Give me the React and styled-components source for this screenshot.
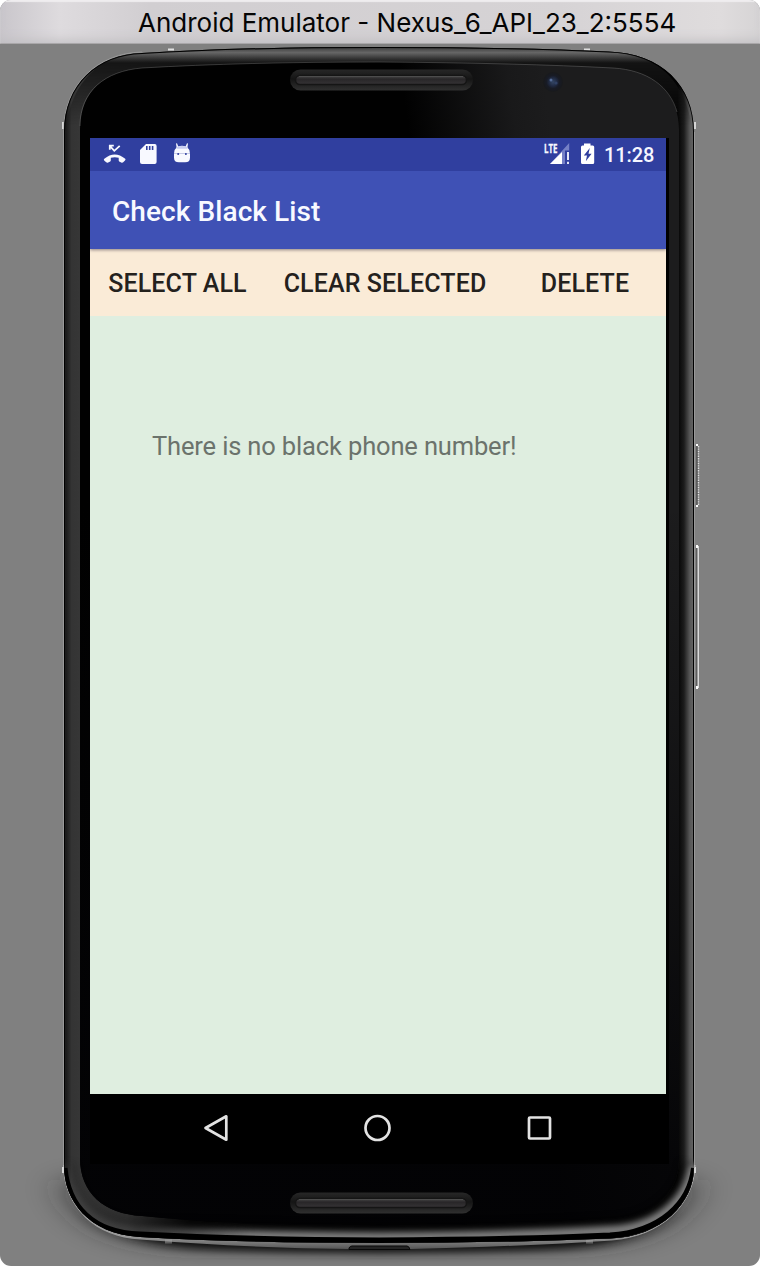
import React from "react";
import styled, { createGlobalStyle } from "styled-components";

const GlobalStyle = createGlobalStyle`
  html, body { margin: 0; background: #fff; }
  * { box-sizing: border-box; }
`;

const Window = styled.main`
  position: relative;
  display: flex;
  flex-direction: column;
  width: 760px;
  height: 1266px;
  overflow: hidden;
  border-radius: 11px;
  background: #808080;
  font-family: Roboto, "Liberation Sans", sans-serif;
`;

const TitleBar = styled.header`
  flex: none;
  height: 44px;
  padding-left: 138px;
  background: linear-gradient(90deg, #c9c6cb 0, #dedbde 60px, #d1ced1 150px, #d6d3d5 560px, #dfdcdd 720px, #d6d4d5 100%);
  box-shadow: inset 0 2px 1px #efedef, inset 0 -1px 0 #a9a7a9, inset 0 -9px 12px -6px #bfbdc1;
`;

const WindowTitle = styled.h1`
  margin: 0;
  font: 400 26px/45px Inter, "Liberation Sans", sans-serif;
  white-space: nowrap;
  color: #050505;
`;

const DeviceArt = styled.svg`
  position: absolute;
  inset: 0;
  pointer-events: none;
`;

const Screen = styled.section`
  position: relative;
  display: flex;
  flex-direction: column;
  width: 576px;
  height: 1026px;
  margin: 94px 0 0 90px;
  background: #000;
  box-shadow: 3px 0 0 #000;
`;

const StatusBar = styled.div`
  display: flex;
  align-items: center;
  justify-content: space-between;
  height: 33px;
  background: #303f9f;
`;

const StatusGroup = styled.div`
  display: flex;
  height: 33px;
`;

const Clock = styled.time`
  width: 62px;
  font-size: 20px;
  font-weight: 500;
  line-height: 34px;
  letter-spacing: -0.1px;
  color: #f5f6ff;
`;

const AppBar = styled.div`
  position: relative;
  z-index: 1;
  height: 78px;
  padding-left: 22px;
  background: #3f51b5;
  box-shadow: 0 1px 3px rgba(50, 40, 60, 0.55);
  clip-path: inset(0 0 -8px 0);
`;

const AppTitle = styled.h2`
  margin: 0;
  font-size: 28px;
  font-weight: 500;
  line-height: 81px;
  letter-spacing: 0.08px;
  color: #f8f9ff;
`;

const ActionBar = styled.div`
  display: flex;
  height: 67px;
  background: #faebd7;
`;

const Action = styled.button`
  flex: 0 0 ${(p) => p.$width}px;
  height: 70px;
  padding: 0;
  border: 0;
  background: none;
  font: 500 25px/70px Roboto, "Liberation Sans", sans-serif;
  letter-spacing: 0.12px;
  text-align: center;
  white-space: nowrap;
  color: #24211d;
`;

const Content = styled.div`
  height: 778px;
  padding: 114px 0 0 62px;
  background: #dfeee0;
`;

const EmptyMessage = styled.p`
  margin: 0;
  font-size: 25.5px;
  line-height: 33px;
  white-space: nowrap;
  letter-spacing: -0.15px;
  color: #6b736c;
`;

const NavBar = styled.nav`
  display: flex;
  gap: 126px;
  height: 70px;
  padding: 16px 0 0 109px;
`;

const NavIcon = styled.svg`
  flex: none;
  width: 36px;
  height: 36px;
  fill: none;
  stroke: #e3e3e3;
  stroke-width: 2.7;
  stroke-linejoin: round;
`;

const OUTER = "M64 132C64 84 98 54 142 53Q240 47 379 47Q510 47 608 51.5C662 53 694 86 694 132V1168C694 1202 662 1237 610 1238.5Q500 1243 379 1243Q245 1243 140 1237C88 1234 64 1200 64 1166Z";
const INNER = "M80 130C80 91 105 71 142 68Q245 62 379 62Q520 63 613 68C654 70 679 94 679 130V1160C679 1194 650 1220 610 1222Q510 1228 379 1228Q240 1226 142 1216C104 1214 80 1193 80 1158Z";
const RIM = "M64 1164C67 1202 92 1230 140 1232Q250 1237 379 1237.5Q510 1237 610 1231C658 1229 690 1200 693 1164";
const BAND = "M64.5 1168C68 1206 92 1233 140 1234.5Q250 1240 379 1240.5Q510 1240 610 1235.5C660 1232 690 1204 694 1168";
const BASE = "M63 1165C64 1208 96 1237.500 140 1239.500Q250 1248 349 1249H411Q530 1246 612 1240.500C662 1237 695 1204 695.500 1165Z";

function Speaker({ y }) {
  return (
    <g>
      <rect x="290" y={y} width="183" height="21" rx="10.5" fill="url(#slot)" />
      <rect x="295.5" y={y + 6} width="171" height="9" rx="4.5" fill="url(#grille)" stroke="#151515" strokeWidth="1.5" />
      <path d={`M299 ${y + 7}H463`} stroke="#4c4c4c" />
    </g>
  );
}

function Device() {
  return (
    <DeviceArt width="760" height="1266" viewBox="0 0 760 1266">
      <defs>
        <linearGradient id="top" x1="0" y1="47" x2="0" y2="63" gradientUnits="userSpaceOnUse">
          <stop stopColor="#383838" /><stop offset=".35" stopColor="#666" /><stop offset=".75" stopColor="#303030" /><stop offset="1" stopColor="#141414" />
        </linearGradient>
        <linearGradient id="sides" x1="64" x2="694" y1="0" y2="0" gradientUnits="userSpaceOnUse">
          <stop stopColor="#222" /><stop offset=".003" stopColor="#1a1a1a" /><stop offset=".012" stopColor="#343434" /><stop offset=".024" stopColor="#363636" /><stop offset=".1" stopColor="#303030" /><stop offset=".2" stopColor="#080808" />
          <stop offset=".974" stopColor="#030303" /><stop offset=".984" stopColor="#1c1c1c" /><stop offset=".993" stopColor="#555" /><stop offset="1" stopColor="#676767" />
        </linearGradient>
        <linearGradient id="topFade" x1="0" y1="60" x2="0" y2="125" gradientUnits="userSpaceOnUse">
          <stop stopColor="#fff" /><stop offset="1" stopColor="#000" />
        </linearGradient>
        <mask id="topMask" maskUnits="userSpaceOnUse" x="0" y="40" width="760" height="110"><rect y="40" width="760" height="110" fill="url(#topFade)" /></mask>
        <linearGradient id="rimFadeX" x1="64" y1="0" x2="250" y2="0" gradientUnits="userSpaceOnUse">
          <stop stopColor="#222" /><stop offset=".4" stopColor="#333" /><stop offset="1" stopColor="#fff" />
        </linearGradient>
        <mask id="rimMask" maskUnits="userSpaceOnUse" x="0" y="1150" width="760" height="116"><rect y="1150" width="760" height="116" fill="url(#rimFadeX)" /></mask>
        <linearGradient id="glass" x1="390" y1="0" x2="530" y2="-20" gradientUnits="userSpaceOnUse">
          <stop stopColor="#010101" /><stop offset=".75" stopColor="#19191a" /><stop offset="1" stopColor="#1c1c1d" />
        </linearGradient>
        <linearGradient id="darken" x1="0" y1="500" x2="0" y2="1170" gradientUnits="userSpaceOnUse">
          <stop stopColor="#050507" stopOpacity="0" /><stop offset="1" stopColor="#030305" stopOpacity=".9" />
        </linearGradient>
        <linearGradient id="slot" x1="0" y1="0" x2="0" y2="1">
          <stop stopColor="#272727" /><stop offset=".45" stopColor="#151515" /><stop offset="1" stopColor="#303030" />
        </linearGradient>
        <linearGradient id="grille" x1="0" y1="0" x2="0" y2="1">
          <stop stopColor="#4b4b4b" /><stop offset=".4" stopColor="#282628" /><stop offset="1" stopColor="#363436" />
        </linearGradient>
        <linearGradient id="silver" x1="0" y1="1160" x2="0" y2="1250" gradientUnits="userSpaceOnUse">
          <stop stopColor="#b8b8b8" /><stop offset=".85" stopColor="#999" /><stop offset="1" stopColor="#505050" />
        </linearGradient>
        <radialGradient id="lens"><stop stopColor="#344664" /><stop offset=".4" stopColor="#202a42" /><stop offset=".65" stopColor="#181b25" /><stop offset="1" stopColor="#18191b" /></radialGradient>
        <filter id="shadow" filterUnits="userSpaceOnUse" x="0" y="1080" width="760" height="186"><feGaussianBlur stdDeviation="10 4.5" /></filter>
        <filter id="wideShadow" filterUnits="userSpaceOnUse" x="0" y="1080" width="760" height="186"><feGaussianBlur stdDeviation="20 11" /></filter>
        <filter id="soft" filterUnits="userSpaceOnUse" x="40" y="1120" width="680" height="146"><feGaussianBlur stdDeviation="3.5" /></filter>
        <clipPath id="bodyClip"><path d={OUTER} /></clipPath>
      </defs>

      <path d="M66 1180C72 1220 110 1243 190 1246H570C650 1243 686 1220 692 1180Z" fill="#222" opacity=".75" filter="url(#wideShadow)" />
      <path d="M90 1210C110 1236 150 1247 220 1250Q380 1256 540 1250C610 1247 650 1236 670 1210Z" fill="#050505" opacity=".85" filter="url(#shadow)" />
      <path d={BASE} fill="url(#silver)" />
      <path d="M349 1249.500V1248Q350 1246 352 1246H407Q409 1246 410 1249.500Z" fill="#242424" stroke="#080808" />
      <path d="M165 1241.500H172M586 1241.500H593" stroke="#aaa" strokeWidth="4" opacity=".45" />
      <path d="M168 49.500H174M584 49.500H590" stroke="#e0e0e0" strokeWidth="2" />
      <path d="M63 122V129M695 122V129M63 1167V1173M695 1167V1173" stroke="#d5d5d5" strokeWidth="2" />
      <path d={OUTER} fill="url(#sides)" />
      <path d="M63.500 1166V132C63.500 84 98 53 142 52" fill="none" stroke="#aaa" strokeOpacity=".6" />
      <path d="M694.500 132V1168" stroke="#aaa" strokeOpacity=".6" />
      <g clipPath="url(#bodyClip)">
        <path d="M64 155C64 84 98 54 142 53Q240 47 379 47Q510 47 608 51.500C662 53 694 86 694 155" fill="url(#top)" mask="url(#topMask)" />
        <path d={OUTER} fill="none" stroke="#000" strokeWidth="2" />
        <path d={INNER} fill="url(#glass)" />
        <path d={INNER} fill="url(#darken)" />
        <g mask="url(#rimMask)">
          <path d={RIM} fill="none" stroke="#000" strokeWidth="24" filter="url(#soft)" />
          <path d={RIM} fill="none" stroke="#8b8b8b" strokeWidth="10" filter="url(#soft)" />
        </g>
        <path d={BAND} fill="none" stroke="#000" strokeWidth="6" />
      </g>
      <path d="M80 126C80 91 105 71 142 68Q245 62 379 62Q520 63 613 68C648 70 670 87 677 112" fill="none" stroke="#999" strokeOpacity=".4" strokeWidth=".8" />
      <Speaker y={69.5} />
      <Speaker y={1192.5} />
      <circle cx="553" cy="82" r="10" fill="url(#lens)" /><circle cx="551" cy="80" r="1.500" fill="#566d98" /><circle cx="556" cy="83" r="1.600" fill="#304164" />
      <path d="M697 444V507M697 546V688" stroke="#5c5c5c" strokeWidth="2" />
      <path d="M698.500 446V505" stroke="#e1e1e1" strokeWidth="1.400" strokeDasharray="1.4 1" />
      <path d="M698.200 546V688" stroke="#e9e9e9" strokeWidth="1.300" />
      <path d="M697 444V446M697 505V507M697 545V548M697 686V689" stroke="#fff" strokeWidth="2" />
    </DeviceArt>
  );
}

const Notifications = () => (
  <svg width="120" height="33" viewBox="0 0 120 33" aria-label="Notifications">
    <g fill="#f8f9ff">
      <path d="M14.300 20.800Q24.700 12.200 35.200 20.800Q36 21.600 35 22.600L33.200 24.300Q32.300 25.100 31.200 24.500L29.200 23.400Q28.700 23 28.700 22.200V19.800Q24.800 18.500 20.800 19.800V22.200Q20.800 23 20.200 23.400L18.200 24.500Q17.200 25.100 16.200 24.300L14.400 22.700Q13.300 21.700 14.300 20.800Z" />
      <path d="M19.800 11.700V7.700H23.800M20 8.200L24.300 12.800L29.700 7.800" fill="none" stroke="#f8f9ff" strokeWidth="1.800" />
      <path d="M56 6H64.800Q66.600 6 66.600 8V24Q66.600 26 64.600 26H52Q50 26 50 24V12Z" />
      <path d="M84 15.500H100V19.800Q100 24.300 95.200 24.300H88.800Q84 24.300 84 19.800Z" />
      <path d="M84 15.500Q84 11.500 86.600 9.600L86 5.500L87 5.200L88.300 8.400Q92 7.200 95.600 8.400L97 5.200L98 5.500L97.400 9.600Q100 11.500 100 15.500Z" />
    </g>
    <path d="M56.800 8V12M59.700 8V12M62.600 8V12" stroke="#303f9f" strokeWidth="1.600" />
    <path d="M86.500 8.900Q92 7.300 97.500 8.900V10.700H86.500Z" fill="#c8cdf0" />
    <circle cx="88.200" cy="16" r="1" fill="#303f9f" /><circle cx="95.900" cy="16" r="1" fill="#303f9f" />
  </svg>
);

const SignalLabel = styled.text`
  font: 700 12px "Open Sans", Roboto, sans-serif;
  fill: #f8f9ff;
  stroke: #f8f9ff;
  stroke-width: 0.3px;
`;

const SystemStatus = () => (
  <svg width="61" height="33" viewBox="0 0 61 33" aria-label="LTE, charging">
    <path d="M26.200 5V12.500H22V26H7Z" fill="#7580c6" />
    <path d="M7 26L19 14V26Z" fill="#fff" />
    <SignalLabel x="1" y="14.800" textLength="13.500" lengthAdjust="spacingAndGlyphs">LTE</SignalLabel>
    <path d="M25 14V22M25 23.700V26" stroke="#f8f9ff" strokeWidth="1.800" />
    <path d="M41 5.500H47.500V7.500H49.800Q51.200 7.500 51.200 9V24.500Q51.200 26 49.800 26H39.500Q38 26 38 24.500V9Q38 7.500 39.500 7.500H41Z" fill="#fff" />
    <path d="M46.800 10L40.800 17.500H44L42.800 23.300L48.600 15.700H45.500Z" fill="#303f9f" />
  </svg>
);

export default function App() {
  return (
    <>
      <GlobalStyle />
      <Window>
        <Device />
        <TitleBar><WindowTitle>Android Emulator - Nexus_6_API_23_2:5554</WindowTitle></TitleBar>
        <Screen>
          <StatusBar>
            <Notifications />
            <StatusGroup><SystemStatus /><Clock>11:28</Clock></StatusGroup>
          </StatusBar>
          <AppBar><AppTitle>Check Black List</AppTitle></AppBar>
          <ActionBar>
            <Action $width={175}>SELECT ALL</Action>
            <Action $width={240}>CLEAR SELECTED</Action>
            <Action $width={160}>DELETE</Action>
          </ActionBar>
          <Content><EmptyMessage>There is no black phone number!</EmptyMessage></Content>
          <NavBar>
            <NavIcon aria-label="Back"><path d="M6.500 18L27.300 6.300V29.700Z" /></NavIcon>
            <NavIcon aria-label="Home"><circle cx="16.500" cy="18" r="12" /></NavIcon>
            <NavIcon aria-label="Recents"><rect x="6" y="7.500" width="21" height="21" rx="1" /></NavIcon>
          </NavBar>
        </Screen>
      </Window>
    </>
  );
}
